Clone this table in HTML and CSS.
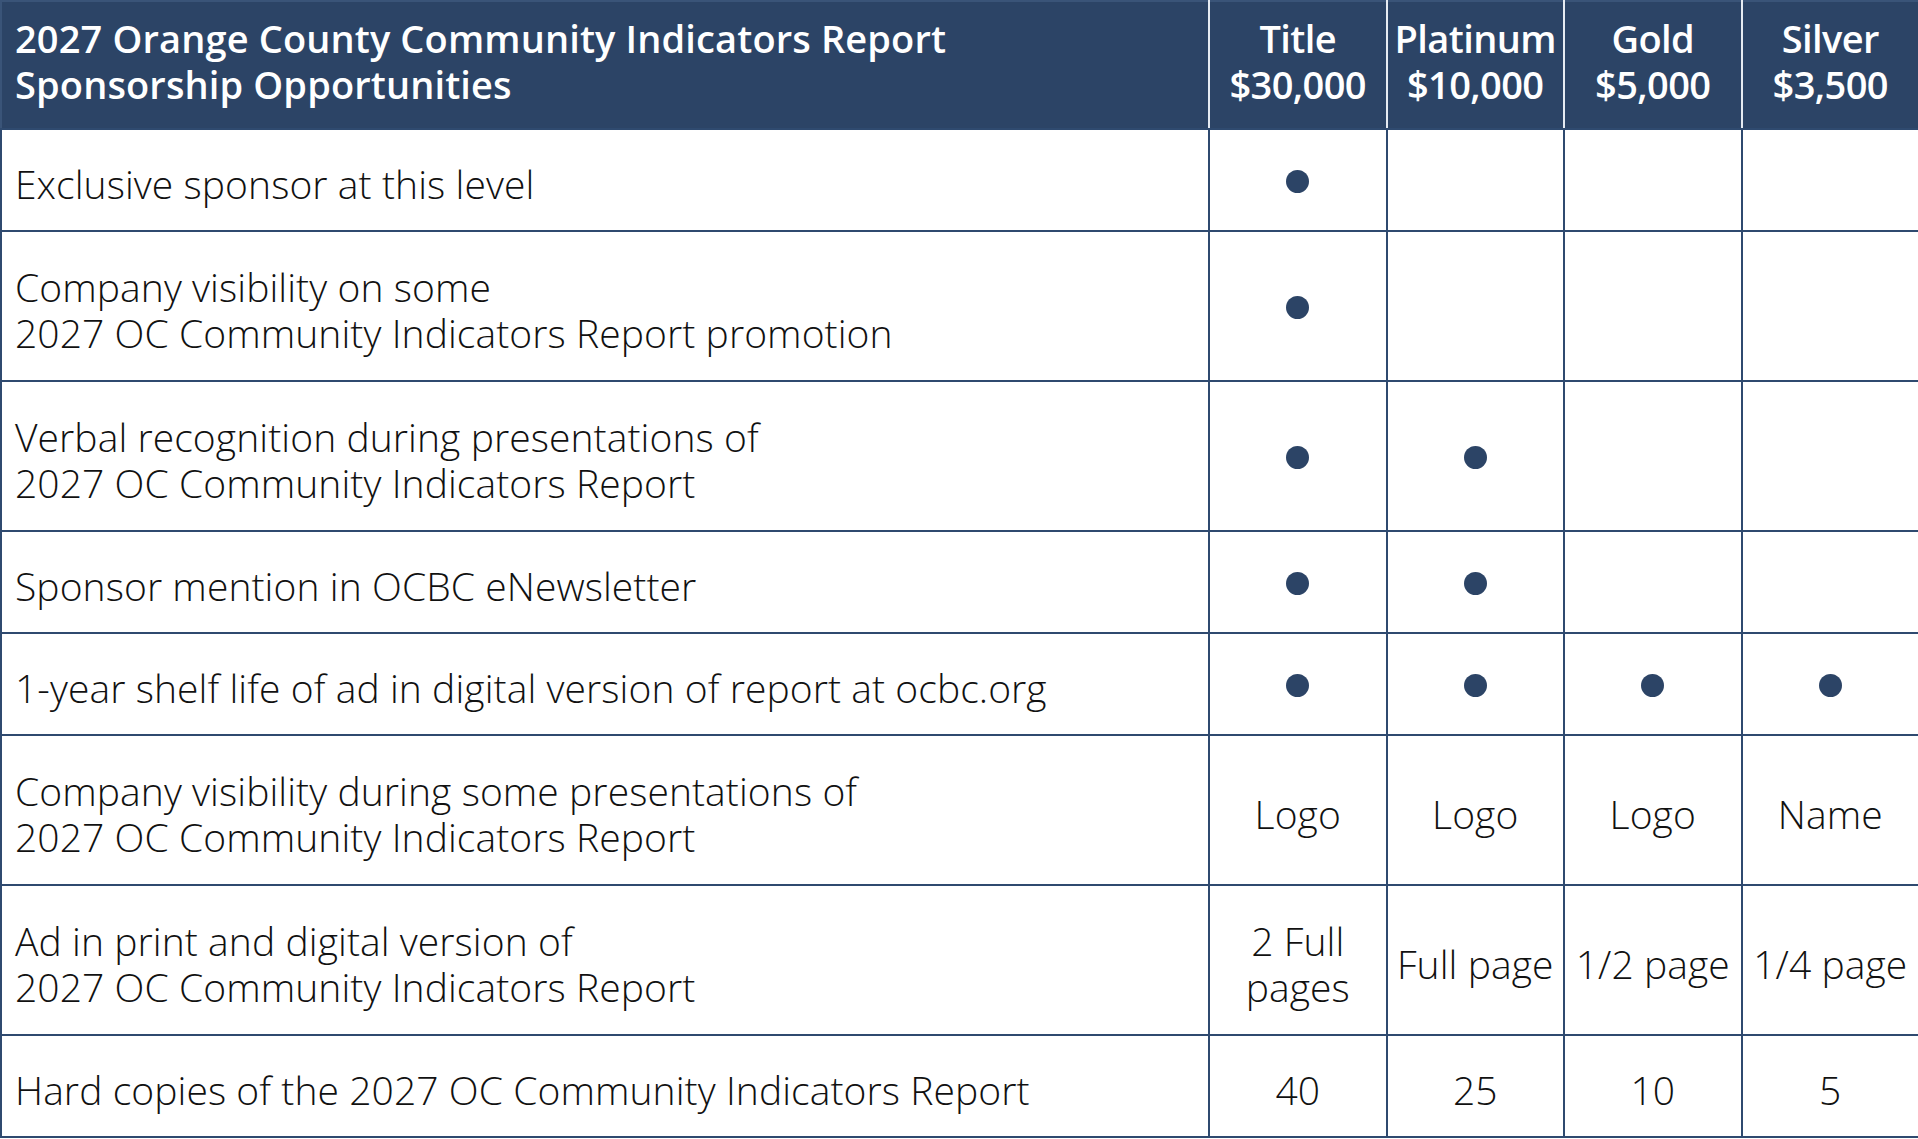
FILE: index.html
```html
<!DOCTYPE html>
<html lang="en">
<head>
<meta charset="utf-8">
<title>2027 Orange County Community Indicators Report Sponsorship Opportunities</title>
<link rel="stylesheet" href="styles.css">
</head>
<body>
<table class="sponsor-table">
  <colgroup>
    <col class="col-benefit">
    <col class="col-level">
    <col class="col-level">
    <col class="col-level">
    <col class="col-level">
  </colgroup>
  <thead>
    <tr class="head-row">
      <th class="head-title">2027 Orange County Community Indicators Report<br>Sponsorship Opportunities</th>
      <th class="head-level">Title<br>$30,000</th>
      <th class="head-level">Platinum<br>$10,000</th>
      <th class="head-level">Gold<br>$5,000</th>
      <th class="head-level">Silver<br>$3,500</th>
    </tr>
  </thead>
  <tbody>
    <tr class="row-single">
      <td class="benefit">Exclusive sponsor at this level</td>
      <td class="cell cell-dot"><span class="dot"></span></td>
      <td class="cell"></td>
      <td class="cell"></td>
      <td class="cell"></td>
    </tr>
    <tr class="row-double">
      <td class="benefit">Company visibility on some<br>2027 OC Community Indicators Report promotion</td>
      <td class="cell cell-dot"><span class="dot"></span></td>
      <td class="cell"></td>
      <td class="cell"></td>
      <td class="cell"></td>
    </tr>
    <tr class="row-double">
      <td class="benefit">Verbal recognition during presentations of<br>2027 OC Community Indicators Report</td>
      <td class="cell cell-dot"><span class="dot"></span></td>
      <td class="cell cell-dot"><span class="dot"></span></td>
      <td class="cell"></td>
      <td class="cell"></td>
    </tr>
    <tr class="row-single">
      <td class="benefit">Sponsor mention in OCBC eNewsletter</td>
      <td class="cell cell-dot"><span class="dot"></span></td>
      <td class="cell cell-dot"><span class="dot"></span></td>
      <td class="cell"></td>
      <td class="cell"></td>
    </tr>
    <tr class="row-single">
      <td class="benefit">1-year shelf life of ad in digital version of report at ocbc.org</td>
      <td class="cell cell-dot"><span class="dot"></span></td>
      <td class="cell cell-dot"><span class="dot"></span></td>
      <td class="cell cell-dot"><span class="dot"></span></td>
      <td class="cell cell-dot"><span class="dot"></span></td>
    </tr>
    <tr class="row-double">
      <td class="benefit">Company visibility during some presentations of<br>2027 OC Community Indicators Report</td>
      <td class="cell">Logo</td>
      <td class="cell">Logo</td>
      <td class="cell">Logo</td>
      <td class="cell">Name</td>
    </tr>
    <tr class="row-double">
      <td class="benefit">Ad in print and digital version of<br>2027 OC Community Indicators Report</td>
      <td class="cell">2 Full<br>pages</td>
      <td class="cell">Full page</td>
      <td class="cell">1/2 page</td>
      <td class="cell">1/4 page</td>
    </tr>
    <tr class="row-single">
      <td class="benefit">Hard copies of the 2027 OC Community Indicators Report</td>
      <td class="cell">40</td>
      <td class="cell">25</td>
      <td class="cell">10</td>
      <td class="cell">5</td>
    </tr>
  </tbody>
</table>
</body>
</html>
```
FILE: styles.css
```css
html, body {
  margin: 0;
  padding: 0;
  background: #ffffff;
}

.sponsor-table {
  width: 1918px;
  table-layout: fixed;
  border-collapse: collapse;
  font-family: "Open Sans", "Noto Sans", sans-serif;
  color: #111111;
}

.col-benefit {
  width: 1208px;
}

.col-level {
  width: 177.5px;
}

.head-row {
  height: 128px;
  background: #2c4466;
}

.head-row th {
  color: #ffffff;
  font-weight: 600;
  font-size: 38px;
  line-height: 46px;
  vertical-align: middle;
  padding: 0 0 8px 0;
  border-top: 2px solid #3a5478;
  border-bottom: 2px solid #2f4a6f;
}

.head-title {
  text-align: left;
  letter-spacing: 0.13px;
  padding-left: 13px !important;
  border-left: 2px solid #3a5478;
  border-right: 2px solid #e6ebf2;
}

.head-level {
  text-align: center;
  white-space: nowrap;
  letter-spacing: -0.6px;
  border-left: 2px solid #e6ebf2;
  border-right: 2px solid #e6ebf2;
}

.head-level:last-child {
  border-right: 2px solid #2f4a6f;
}

.row-single {
  height: 102px;
}

.row-double {
  height: 150px;
}

.benefit,
.cell {
  font-weight: 300;
  font-size: 39px;
  line-height: 46px;
  letter-spacing: 0.08px;
  vertical-align: middle;
  border: 2px solid #2f4a6f;
  padding: 8px 0 0 0;
}

.benefit {
  text-align: left;
  padding-left: 13px;
  white-space: nowrap;
}

.cell {
  text-align: center;
  white-space: nowrap;
}

.cell-dot {
  padding: 2px 0 0 0;
  line-height: 0;
}

.dot {
  display: block;
  width: 23px;
  height: 23px;
  margin: 0 auto;
  border-radius: 50%;
  background: #2c4466;
}
```
